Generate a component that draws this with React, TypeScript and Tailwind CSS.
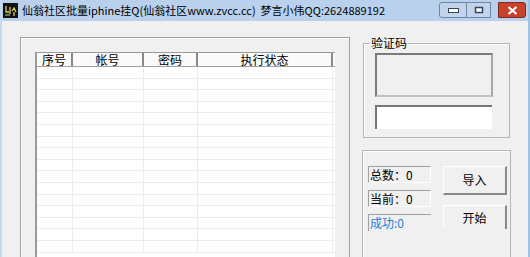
import React from 'react'

const cols = [
  { label: '序号', w: 'w-[36px]' },
  { label: '帐号', w: 'w-[71px]' },
  { label: '密码', w: 'w-[54px]' },
  { label: '执行状态', w: 'w-[135px]' },
]

function AppIcon() {
  return (
    <svg width="15" height="15" viewBox="0 0 15 15">
      <rect width="15" height="15" fill="#111" />
      <path d="M3 3v6h3M7 4v7M9 8l2-3 2 4M11 9v4" stroke="#d8d060" strokeWidth="1.3" fill="none" />
      <path d="M2 12h5" stroke="#8fc060" strokeWidth="1.2" />
    </svg>
  )
}

function SunkenLabel({ text, blue = false }: { text: string; blue?: boolean }) {
  return (
    <div
      className={`w-[63px] h-[17px] flex items-center pl-[1px] text-[12px] leading-none border-t border-l border-[#a0a0a0] ${
        blue ? 'text-[#1f7fd8] border-r-0 border-b-0' : 'text-black border-b border-r border-b-white border-r-white'
      }`}
    >
      {text}
    </div>
  )
}

function Button({ text, open = false }: { text: string; open?: boolean }) {
  return (
    <div
      className={`w-[64px] flex items-center justify-center text-[12px] border-t border-l border-t-white border-l-white border-r-2 border-r-[#8a8a8a] ${
        open ? 'h-[24px]' : 'h-[29px] border-b-2 border-b-[#8a8a8a]'
      }`}
    >
      {text}
    </div>
  )
}

export default function App() {
  return (
    <div
      className="w-[530px] h-[257px] overflow-hidden bg-[#f0f0f0] border-l-2 border-r-2 border-l-[#c6d9ee] border-r-[#9fc3e6] flex flex-col"
      style={{ fontFamily: '"Noto Sans CJK SC", "Liberation Sans", sans-serif' }}
    >
      {/* Title bar */}
      <div className="h-[21px] shrink-0 flex items-center bg-[#b9d1ec] -ml-[2px] -mr-[2px] pl-[3px]">
        <AppIcon />
        <span className="ml-[4px] text-[11px] leading-none text-black whitespace-nowrap">
          仙翁社区批量iphine挂Q(仙翁社区www.zvcc.cc)&nbsp;&nbsp;梦言小伟QQ:2624889192
        </span>
        <div className="ml-auto flex items-start self-start mt-[2px] mr-[4px]">
          <div className="w-[28px] h-[16px] rounded-l-[3px] border border-[#6f86a6] bg-[#c2d4ea] flex items-center justify-center">
            <svg width="11" height="5" viewBox="0 0 11 5">
              <rect x="0.5" y="0.5" width="10" height="4" fill="#fff" stroke="#34465e" />
            </svg>
          </div>
          <div className="w-[24px] h-[16px] border-t border-b border-r border-[#6f86a6] bg-[#c2d4ea] flex items-center justify-center">
            <svg width="10" height="8" viewBox="0 0 10 8">
              <rect x="1.5" y="1.5" width="7" height="5" fill="#fff" stroke="#34465e" strokeWidth="1.5" />
            </svg>
          </div>
          <div className="ml-[7px] w-[28px] h-[16px] rounded-r-[3px] border border-[#7e2a1e] bg-[#c9412b] flex items-center justify-center">
            <svg width="11" height="9" viewBox="0 0 11 9">
              <path d="M1.5 1l8 7M9.5 1l-8 7" stroke="#ffffff" strokeWidth="2.2" />
            </svg>
          </div>
        </div>
      </div>

      <div className="flex flex-1 min-h-0">
        {/* Left panel */}
        <div className="pl-[18px] pt-[16px] flex">
          <div className="w-[330px] h-[240px] border-t border-l border-r border-[#a0a0a0] shadow-[inset_1px_1px_0_#fff] pl-[14px] pt-[14px]">
            <div className="w-[300px] h-[220px] bg-white border-l-2 border-t border-[#9a9a9a] flex flex-col">
              <div className="h-[14px] flex border-b border-[#a0a0a0] bg-[#fafafa]">
                {cols.map((c) => (
                  <div
                    key={c.label}
                    className={`${c.w} shrink-0 text-center text-[12px] leading-[13px] border-r-2 border-r-[#8a8a8a] text-black`}
                  >
                    {c.label}
                  </div>
                ))}
              </div>
              <div className="flex-1 relative">
                {Array.from({ length: 16 }).map((_, i) => (
                  <div key={i} className="h-[11.6px] flex border-b border-[#ececec]">
                    {cols.map((c) => (
                      <div key={c.label} className={`${c.w} shrink-0 border-r border-[#ececec]`} />
                    ))}
                  </div>
                ))}
              </div>
            </div>
          </div>
        </div>

        {/* Right panel */}
        <div className="ml-[13px] flex flex-col">
          <div className="relative mt-[22px] w-[147px] h-[98px] border border-[#b5b5b5] shadow-[inset_1px_1px_0_#fff] pl-[11px] pt-[9px]">
            <span className="absolute -top-[8px] left-[6px] bg-[#f0f0f0] px-[1px] text-[12px] leading-[14px]">验证码</span>
            <div className="w-[118px] h-[44px] border-2 border-[#7a7a7a] border-b-[#c0c0c0] border-r-[#a8a8a8]" />
            <div className="mt-[8px] w-[117px] h-[24px] bg-white border-t-2 border-l-2 border-[#777]" />
          </div>
          <div className="mt-[12px] w-[149px] h-[110px] -ml-[1px] border-t border-l border-r border-[#b5b5b5] shadow-[inset_1px_1px_0_#fff] pl-[5px] pt-[15px] flex">
            <div className="flex flex-col gap-[7px]">
              <SunkenLabel text="总数：0" />
              <SunkenLabel text="当前：0" />
              <SunkenLabel text="成功:0" blue />
            </div>
            <div className="ml-[12px] flex flex-col gap-[10px]">
              <Button text="导入" />
              <Button text="开始" open />
            </div>
          </div>
        </div>
      </div>
    </div>
  )
}
